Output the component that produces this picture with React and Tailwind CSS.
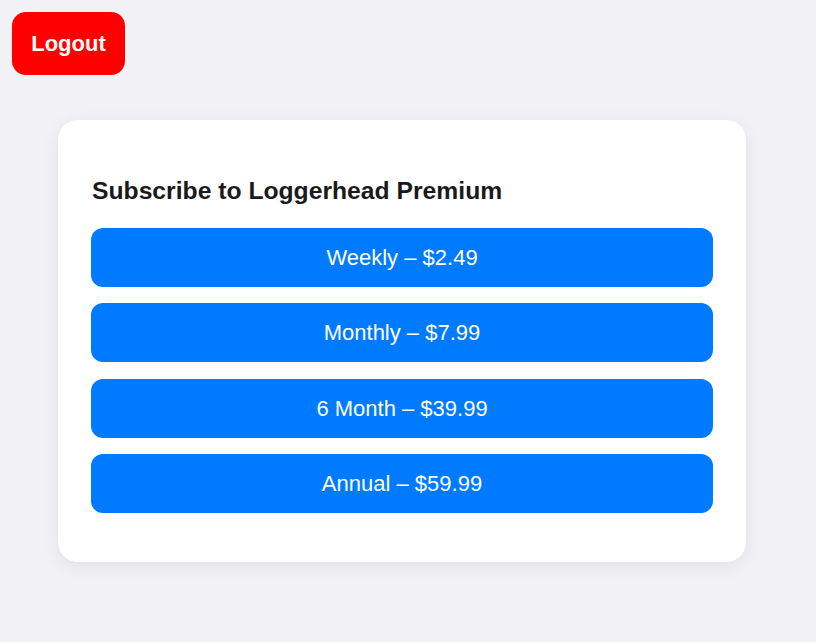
export default function App() {
  const plans = ["Weekly – $2.49", "Monthly – $7.99", "6 Month – $39.99", "Annual – $59.99"];
  return (
    <div className="min-h-[642px] w-full bg-[#f1f1f6] pt-[12px] pl-[12px]" style={{ fontFamily: '"Liberation Sans", Arial, sans-serif' }}>
      <button className="h-[63px] w-[113px] rounded-[14px] bg-[#ff0000] text-[22px] font-bold leading-[25px] text-white">
        Logout
      </button>
      <div className="ml-[46px] mt-[45px] w-[688px] rounded-[20px] bg-white px-[33px] pt-[56px] pb-[49px] shadow-[0_4px_18px_rgba(0,0,0,0.07)]">
        <h2 className="pl-px text-[24.7px] font-bold leading-[29px] text-[#1a1a1a]">Subscribe to Loggerhead Premium</h2>
        <div className="mt-[23px] flex flex-col gap-[16.3px]">
          {plans.map((p) => (
            <button key={p} className="h-[59px] w-full rounded-[12px] bg-[#007aff] text-[22px] leading-[25px] text-white">
              {p}
            </button>
          ))}
        </div>
      </div>
    </div>
  );
}
